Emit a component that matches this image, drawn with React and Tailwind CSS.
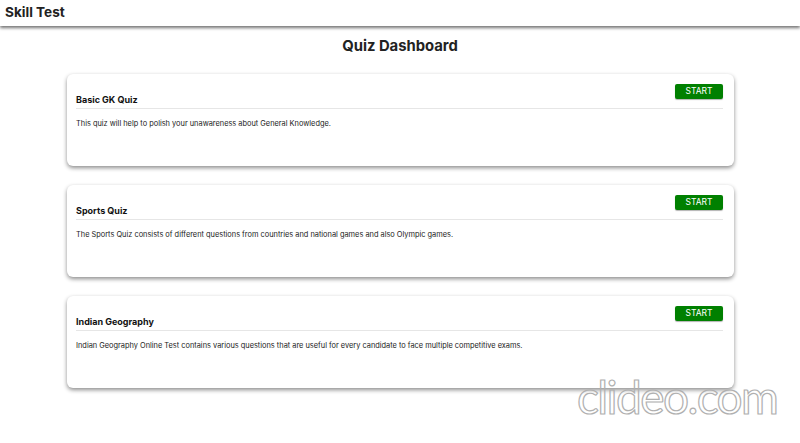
const quizzes = [
  {
    id: 1,
    title: 'Basic GK Quiz',
    description: 'This quiz will help to polish your unawareness about General Knowledge.',
  },
  {
    id: 2,
    title: 'Sports Quiz',
    description: 'The Sports Quiz consists of different questions from countries and national games and also Olympic games.',
  },
  {
    id: 3,
    title: 'Indian Geography',
    description: 'Indian Geography Online Test contains various questions that are useful for every candidate to face multiple competitive exams.',
  },
];

function QuizCard({ quiz }) {
  return (
    <div className="h-[92px] rounded-[6px] bg-white pl-[9px] pr-[11px] pt-[10px] shadow-[0_2px_4px_rgba(0,0,0,0.45)]">
      <div className="flex justify-end">
        <button className="h-[15px] w-[48px] rounded-[2px] bg-[#008000] text-[8.5px] leading-[15px] text-white shadow-[0_1px_1px_rgba(0,0,0,0.3)]">
          START
        </button>
      </div>
      <h2 className="-mt-[5px] text-[9px] font-bold leading-[11px] text-[#111]">{quiz.title}</h2>
      <div className="mt-[3px] h-px bg-[#e6e6e6]" />
      <p className="mt-[10px] text-[7.4px] leading-[10px] text-[#222]">{quiz.description}</p>
    </div>
  );
}

export default function App() {
  return (
    <div className="relative min-h-[443px] overflow-hidden bg-white font-['Inter',sans-serif]">
      {/* Header */}
      <header className="h-[26px] bg-white px-[5px] shadow-[0_2px_3px_rgba(0,0,0,0.55)]">
        <h1 className="text-[13.6px] font-bold leading-[24px] text-[#222]">Skill Test</h1>
      </header>

      {/* Content */}
      <main className="px-[67px] pt-[9px]">
        <h2 className="text-center text-[14.8px] font-bold leading-[22px] text-[#222]">Quiz Dashboard</h2>
        <div className="mt-[17px] flex w-[667px] flex-col gap-[19px]">
          {quizzes.map(quiz => (
            <QuizCard key={quiz.id} quiz={quiz} />
          ))}
        </div>
      </main>

      {/* Watermark */}
      <div className="pointer-events-none absolute left-[577px] top-[372px] font-['Lato',sans-serif] text-[46px] leading-[50px] tracking-[-1.6px] text-transparent [-webkit-text-stroke:1.2px_#b0b0b0]">
        clideo.com
      </div>
    </div>
  );
}
